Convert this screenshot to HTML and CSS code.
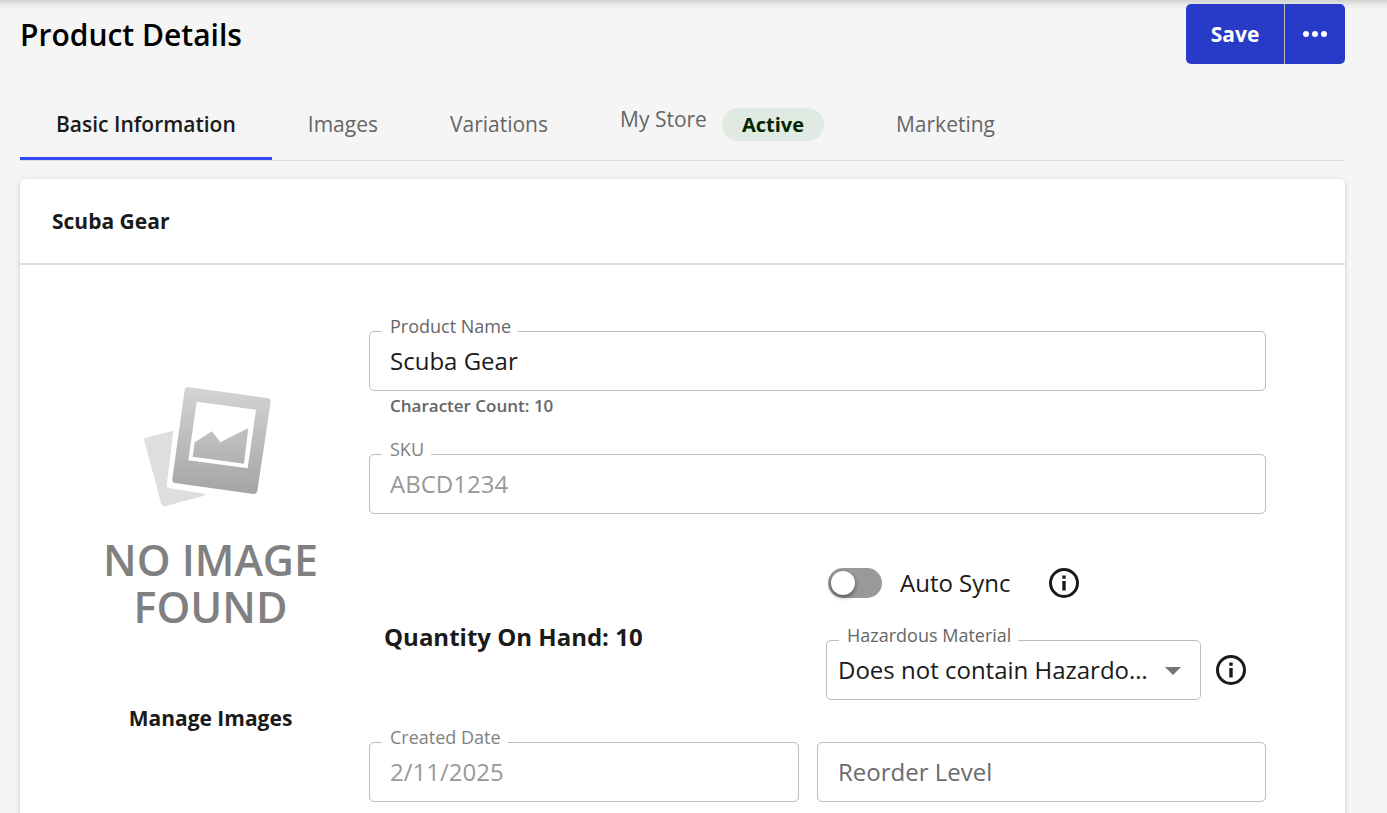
FILE: index.html
```html
<!DOCTYPE html>
<html lang="en">
  <head>
    <meta charset="UTF-8" />
    <meta name="viewport" content="width=device-width, initial-scale=1.0" />
    <title>Product Details</title>
    <link rel="stylesheet" href="styles.css">
  </head>
  <body>
    <main class="page">
      <header class="page-header">
        <h1>Product Details</h1>
        <div class="button-group">
          <button class="save-button" type="button">Save</button>
          <button class="more-button" type="button" aria-label="More actions">
            <svg width="26" height="8" viewBox="0 0 26 8" fill="currentColor">
              <circle cx="4" cy="4" r="3" />
              <circle cx="13" cy="4" r="3" />
              <circle cx="22" cy="4" r="3" />
            </svg>
          </button>
        </div>
      </header>

      <nav class="tabs">
        <a class="tab active" href="#basic">Basic Information</a>
        <a class="tab" href="#images">Images</a>
        <a class="tab" href="#variations">Variations</a>
        <a class="tab" href="#store"><span class="tab-store">My Store <span class="chip">Active</span></span></a>
        <a class="tab" href="#marketing">Marketing</a>
      </nav>

      <section class="card" id="basic">
        <h2 class="card-title">Scuba Gear</h2>

        <div class="card-body">
          <aside class="product-image">
            <svg class="placeholder-icon" width="142" height="123" viewBox="150 45 426 369">
              <defs>
                <linearGradient id="photo" gradientUnits="userSpaceOnUse" x1="0" y1="50" x2="0" y2="375">
                  <stop offset="0" stop-color="#d4d4d4" />
                  <stop offset="1" stop-color="#a4a4a4" />
                </linearGradient>
              </defs>
              <!-- photo behind -->
              <path fill="#dedede" d="M250 182 L168 203 Q161 205 163 212 L214 402 Q217 411 226 409 L342 377 Q350 374 342 371 L235 354 Q229 353 230 346 Z" />
              <!-- photo in front -->
              <path fill="url(#photo)" fill-rule="evenodd" d="M294 51 L536 85 Q543 87 542 95 L502 364 Q500 373 491 372 L254 339 Q246 337 247 328 L284 59 Q286 50 294 51 Z M320 95 L295 271 L473 295 L498 119 Z" />
              <path fill="url(#photo)" d="M314 217 L366 184 L391 217 L475 174 L462 281 L308 260 Z" />
            </svg>
            <p class="placeholder-text">NO IMAGE<br>FOUND</p>
            <a class="manage-link" href="#images">Manage Images</a>
          </aside>

          <form class="product-form">
            <div class="field">
              <label for="productName">Product Name</label>
              <input type="text" id="productName" value="Scuba Gear">
            </div>
            <p class="helper">Character Count: 10</p>

            <div class="field">
              <label class="muted" for="sku">SKU</label>
              <input type="text" id="sku" value="ABCD1234" disabled>
            </div>

            <div class="form-row stock-row">
              <p class="quantity">Quantity On Hand: 10</p>
              <div class="options">
                <div class="sync">
                  <input class="switch" type="checkbox" id="autoSync">
                  <label for="autoSync">Auto Sync</label>
                  <svg class="info-icon" width="30" height="30" viewBox="0 0 30 30">
                    <circle cx="15" cy="15" r="13.5" fill="none" stroke="#1a1a1a" stroke-width="3" />
                    <path fill="#1a1a1a" d="M13.3 7.5h3.4v3.2h-3.4z M13.3 13h3.4v9.5h-3.4z" />
                  </svg>
                </div>
                <div class="hazard">
                  <div class="field">
                    <label for="hazard">Hazardous Material</label>
                    <select id="hazard">
                      <option>Does not contain Hazardous Material</option>
                      <option>Contains Hazardous Material</option>
                    </select>
                    <svg class="arrow" width="16" height="8" viewBox="0 0 16 8">
                      <path fill="#757575" d="M0 0h16l-8 8z" />
                    </svg>
                  </div>
                  <svg class="info-icon" width="30" height="30" viewBox="0 0 30 30">
                    <circle cx="15" cy="15" r="13.5" fill="none" stroke="#1a1a1a" stroke-width="3" />
                    <path fill="#1a1a1a" d="M13.3 7.5h3.4v3.2h-3.4z M13.3 13h3.4v9.5h-3.4z" />
                  </svg>
                </div>
              </div>
            </div>

            <div class="form-row">
              <div class="field">
                <label class="muted" for="createdDate">Created Date</label>
                <input type="text" id="createdDate" value="2/11/2025" disabled>
              </div>
              <div class="field">
                <input type="text" id="reorderLevel" placeholder="Reorder Level" aria-label="Reorder Level">
              </div>
            </div>
          </form>
        </div>
      </section>
    </main>
  </body>
</html>
```

FILE: styles.css
```css
* {
  box-sizing: border-box;
}

body {
  margin: 0;
  font-family: "Open Sans", "Noto Sans", sans-serif;
  color: #1a1a1a;
  background-color: #f5f5f5;
}

h1,
h2,
p {
  margin: 0;
}

a {
  color: inherit;
  text-decoration: none;
}

input,
select,
button {
  font-family: inherit;
}

.page {
  padding: 4px 42px 10px 20px;
  background: linear-gradient(#d0d0d0, #ececec 5px, #f5f5f5 10px);
}

/* Header */
.page-header {
  display: flex;
  justify-content: space-between;
  align-items: center;
}

h1 {
  font-size: 30px;
  font-weight: 600;
  color: #000;
}

.button-group {
  display: flex;
  height: 60px;
  border-radius: 5px;
  overflow: hidden;
}

.button-group button {
  display: flex;
  align-items: center;
  justify-content: center;
  border: none;
  padding: 0;
  background-color: #283bc8;
  color: #fff;
  font-size: 21px;
  font-weight: 700;
  cursor: pointer;
}

.button-group .save-button {
  width: 99px;
  border-right: 1px solid #b9b9b9;
}

.button-group .more-button {
  width: 60px;
}

/* Tabs */
.tabs {
  display: flex;
  margin-top: 24px;
  border-bottom: 1px solid #dedede;
}

.tab {
  display: flex;
  align-items: center;
  height: 72px;
  padding: 3px 36px 0;
  border-bottom: 3px solid transparent;
  color: #666;
  font-size: 21px;
  line-height: 24px;
}

.tab.active {
  border-bottom-color: #3449f5;
  color: #1a1a1a;
  font-weight: 600;
}

.tab-store {
  display: flex;
  align-items: flex-start;
  gap: 15px;
  line-height: 22px;
}

.chip {
  padding: 0 20px;
  border-radius: 17px;
  background-color: #e0eae2;
  color: #002600;
  font-size: 20px;
  font-weight: 700;
  line-height: 33px;
}

/* Card */
.card {
  margin-top: 18px;
  border-radius: 5px;
  background-color: #fff;
  box-shadow: 0 1px 4px rgba(0, 0, 0, 0.2);
}

.card-title {
  padding: 27px 32px;
  border-bottom: 2px solid #dedede;
  font-size: 21px;
  font-weight: 700;
  line-height: 30px;
}

.card-body {
  display: grid;
  grid-template-columns: 317px 1fr;
  padding: 66px 79px 66px 32px;
}

.product-image {
  display: flex;
  flex-direction: column;
  align-items: center;
  padding-top: 54px;
}

.placeholder-text {
  margin-top: 28px;
  color: #808080;
  font-size: 43px;
  font-weight: 600;
  line-height: 47px;
  text-align: center;
}

.manage-link {
  margin-top: 73px;
  font-size: 21px;
  font-weight: 700;
  line-height: 30px;
}

/* Form */
.field {
  position: relative;
  flex: 1;
}

.field label {
  position: absolute;
  top: -17px;
  left: 13px;
  padding: 0 7px 0 8px;
  background-color: #fff;
  color: #666;
  font-size: 18px;
  line-height: 24px;
}

.field .muted {
  color: #808080;
}

.field input,
.field select {
  display: block;
  width: 100%;
  height: 60px;
  padding: 0 20px 2px;
  border: 1px solid #bdbdbd;
  border-radius: 5px;
  background-color: #fff;
  color: #1a1a1a;
  font-size: 24px;
}

.field input:disabled {
  color: #999;
}

.field input::placeholder {
  color: #6b6b6b;
}

.field select {
  appearance: none;
  padding: 0 50px 2px 11px;
  text-overflow: ellipsis;
}

.arrow {
  position: absolute;
  top: 27px;
  right: 20px;
  pointer-events: none;
}

.helper {
  margin-bottom: 33px;
  padding: 0 21px;
  color: #666;
  font-size: 17px;
  font-weight: 600;
  line-height: 30px;
}

.form-row {
  display: grid;
  grid-template-columns: 430fr 449fr;
  gap: 18px;
}

.stock-row {
  align-items: center;
  margin: 54px 0 42px;
}

.quantity {
  padding: 4px 15px 0;
  font-size: 24px;
  font-weight: 700;
}

.options {
  padding: 0 20px 0 9px;
}

.sync {
  display: flex;
  align-items: center;
  height: 30px;
  margin-bottom: 42px;
  padding-left: 2px;
  font-size: 24px;
}

.sync label {
  margin: 0 38px 0 18px;
  padding-bottom: 2px;
}

.switch {
  appearance: none;
  width: 54px;
  height: 30px;
  margin: 0;
  padding: 3px;
  border-radius: 15px;
  background-color: #999;
  cursor: pointer;
}

.switch::before {
  content: "";
  display: block;
  width: 24px;
  height: 24px;
  border-radius: 50%;
  background-color: #fff;
  box-shadow: 0 2px 4px rgba(0, 0, 0, 0.5);
}

.switch:checked {
  background-color: #283bc8;
}

.switch:checked::before {
  margin-left: auto;
}

.hazard {
  display: flex;
  align-items: center;
  gap: 15px;
}
```
